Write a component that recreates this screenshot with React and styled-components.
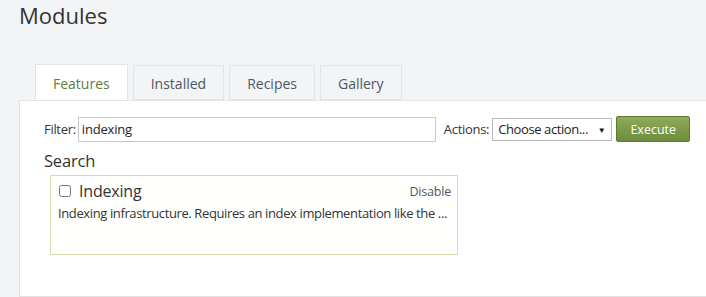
import React, { useState } from 'react';
import styled, { createGlobalStyle } from 'styled-components';

const GlobalStyle = createGlobalStyle`
	html, body {
		margin: 0;
		padding: 0;
		background: #f3f4f6;
		font-family: 'Open Sans', 'Noto Sans', sans-serif;
		color: #333;
	}
`;

const tabs = ['Features', 'Installed', 'Recipes', 'Gallery'];

function App() {
	const [active, setActive] = useState('Features');
	const [filter, setFilter] = useState('indexing');

	return (
		<Page>
			<GlobalStyle />
			<Title>Modules</Title>
			<TabBar>
				{tabs.map((t) => (
					<Tab key={t} $active={t === active} onClick={() => setActive(t)}>
						{t}
					</Tab>
				))}
			</TabBar>
			<Panel>
				<FilterRow>
					<Label>Filter:</Label>
					<FilterInput value={filter} onChange={(e) => setFilter(e.target.value)} />
					<Label $spaced>Actions:</Label>
					<Select>
						<span>Choose action...</span>
						<Caret>▼</Caret>
					</Select>
					<Button>Execute</Button>
				</FilterRow>
				<Heading>Search</Heading>
				<Card>
					<CardHead>
						<CheckLabel>
							<Check type="checkbox" />
							Indexing
						</CheckLabel>
						<Action>Disable</Action>
					</CardHead>
					<Description>
						Indexing infrastructure. Requires an index implementation like the ...
					</Description>
				</Card>
			</Panel>
		</Page>
	);
}
export default App;

const Page = styled.div`
	width: 706px;
	height: 297px;
	overflow: hidden;
	padding-left: 19px;
	box-sizing: border-box;
`;
const Title = styled.h1`
	margin: 0;
	padding-top: 1px;
	font-size: 22px;
	font-weight: normal;
	line-height: 28px;
	color: #333;
`;
const TabBar = styled.div`
	display: flex;
	gap: 5px;
	margin-top: 35px;
	padding-left: 16px;
	position: relative;
	z-index: 1;
`;
const Tab = styled.div`
	box-sizing: border-box;
	height: ${(p) => (p.$active ? '36px' : '35px')};
	margin-top: ${(p) => (p.$active ? '0' : '1px')};
	margin-bottom: ${(p) => (p.$active ? '-1px' : '0')};
	padding: 2px 17px 0;
	display: flex;
	align-items: center;
	font-size: 14px;
	color: ${(p) => (p.$active ? '#5f7d3c' : '#4d5865')};
	background: ${(p) => (p.$active ? '#fff' : '#f3f4f6')};
	border: 1px solid #e2e4e6;
	border-bottom: ${(p) => (p.$active ? 'none' : '1px solid #e2e4e6')};
	cursor: pointer;
`;
const Panel = styled.div`
	background: #fff;
	border-top: 1px solid #e2e4e6;
	border-left: 1px solid #dfe1e3;
	border-bottom: 1px solid #dfe1e3;
	height: 197px;
	box-sizing: border-box;
	padding: 15px 0 0 24px;
`;
const FilterRow = styled.div`
	display: flex;
	align-items: center;
`;
const Label = styled.span`
	font-size: 13px;
	color: #333;
	letter-spacing: -0.3px;
	margin: 0 ${(p) => (p.$spaced ? '3px 0 8px' : '2px 0 0')};
`;
const FilterInput = styled.input`
	box-sizing: border-box;
	width: 358px;
	height: 25px;
	border: 1px solid #c8c8c8;
	padding: 0 3px;
	font-family: inherit;
	font-size: 13px;
	letter-spacing: -0.2px;
	color: #222;
	outline: none;
`;
const Select = styled.div`
	box-sizing: border-box;
	width: 120px;
	height: 23px;
	border: 1px solid #b9b9b9;
	display: flex;
	align-items: center;
	justify-content: space-between;
	padding: 0 6px 0 5px;
	font-size: 13px;
	color: #222;
	letter-spacing: -0.4px;
`;
const Caret = styled.span`
	font-size: 8px;
	color: #111;
`;
const Button = styled.button`
	box-sizing: border-box;
	width: 74px;
	height: 26px;
	margin-left: 4px;
	border: 1px solid #5e7a33;
	border-radius: 2px;
	background: linear-gradient(#8eab58, #6e8c3d);
	color: #fff;
	font-family: inherit;
	font-size: 12.5px;
	padding: 0;
`;
const Heading = styled.h2`
	margin: 8px 0 0;
	font-size: 16.5px;
	font-weight: normal;
	line-height: 22px;
	color: #333;
	letter-spacing: -0.2px;
`;
const Card = styled.div`
	box-sizing: border-box;
	width: 408px;
	height: 80px;
	margin: 3px 0 0 6px;
	border: 1px solid #d7dcae;
	background: #fffffd;
	padding: 4px 6px 0 7px;
`;
const CardHead = styled.div`
	display: flex;
	justify-content: space-between;
	align-items: center;
`;
const CheckLabel = styled.label`
	display: flex;
	align-items: center;
	gap: 8px;
	font-size: 16px;
	color: #333;
	letter-spacing: -0.2px;
`;
const Check = styled.input`
	margin: 0 0 0 1px;
	width: 12px;
	height: 12px;
`;
const Action = styled.a`
	font-size: 12.5px;
	color: #4d5865;
	letter-spacing: -0.2px;
`;
const Description = styled.p`
	margin: 2px 0 0;
	font-size: 13px;
	color: #333;
	letter-spacing: -0.38px;
	white-space: nowrap;
`;
